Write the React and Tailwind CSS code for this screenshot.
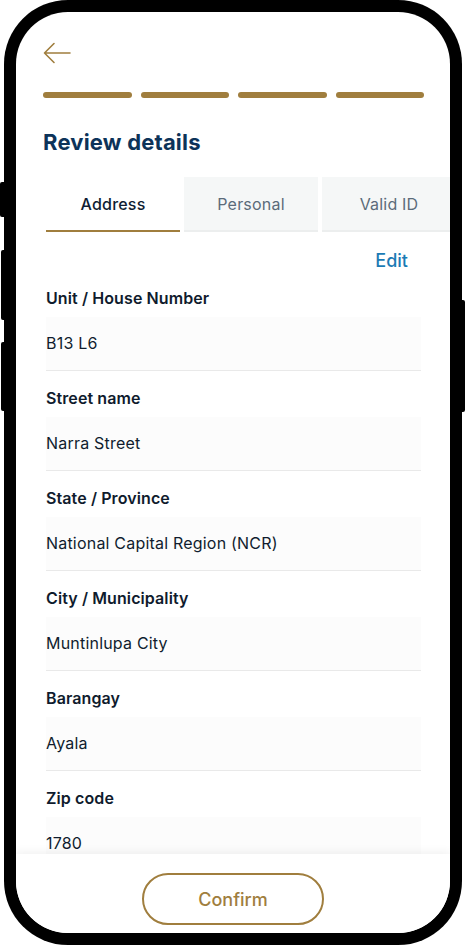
import React from 'react';

const fields = [
  { label: 'Unit / House Number', value: 'B13 L6' },
  { label: 'Street name', value: 'Narra Street' },
  { label: 'State / Province', value: 'National Capital Region (NCR)' },
  { label: 'City / Municipality', value: 'Muntinlupa City' },
  { label: 'Barangay', value: 'Ayala' },
  { label: 'Zip code', value: '1780' },
];

const tabs = ['Address', 'Personal', 'Valid ID'];

const BackArrow = () => (
  <svg width="28" height="22" viewBox="0 0 28 22" fill="none">
    <path d="M11 1.5L1.5 11L11 20.5M1.5 11H27" stroke="#a07e3e" strokeWidth="1.6" strokeLinecap="round" strokeLinejoin="round" />
  </svg>
);

const App = () => {
  return (
    <div className="relative w-[466px] h-[945px] bg-white" style={{ fontFamily: 'Inter, "Noto Sans", sans-serif' }}>
      {/* side buttons */}
      <div className="absolute left-0 top-[182px] w-[8px] h-[35px] rounded-l-[2px] bg-black" />
      <div className="absolute left-[1px] top-[250px] w-[8px] h-[70px] rounded-l-[2px] bg-black" />
      <div className="absolute left-[1px] top-[342px] w-[8px] h-[69px] rounded-l-[2px] bg-black" />
      <div className="absolute left-[458px] top-[300px] w-[7px] h-[112px] rounded-r-[2px] bg-black" />

      {/* phone frame */}
      <div className="relative ml-[4px] w-[458px] h-[945px] rounded-[64px] bg-black p-[12px]">
        <div className="w-full h-full rounded-[52px] bg-white overflow-hidden flex flex-col">
          {/* scrollable content */}
          <div className="flex-1 overflow-hidden pl-[27px]">
            <div className="pt-[30px]">
              <BackArrow />
            </div>

            <div className="mt-[28px] flex gap-[9px] w-[381px]">
              {[0, 1, 2, 3].map((i) => (
                <div key={i} className="flex-1 h-[6px] rounded-full bg-[#a07e3e]" />
              ))}
            </div>

            <h1 className="mt-[29px] h-[30px] leading-[30px] text-[22px] font-bold text-[#0d3359] tracking-[0.2px]">
              Review details
            </h1>

            <div className="mt-[20px] ml-[3px] flex gap-[4px] w-[420px]">
              {tabs.map((t, i) => (
                <div
                  key={t}
                  className={
                    i === 0
                      ? 'shrink-0 w-[134px] h-[55px] flex items-center justify-center bg-white border-b-2 border-[#a07e3e] text-[16px] font-medium text-[#0f1d33] tracking-[0.2px]'
                      : 'shrink-0 w-[134px] h-[55px] flex items-center justify-center bg-[#f5f7f7] border-b-2 border-[#eceeee] text-[16px] text-[#5b6b7a] tracking-[0.2px]'
                  }
                >
                  {t}
                </div>
              ))}
            </div>

            <div className="ml-[3px] w-[375px]">
              <div className="mt-[19px] h-[20px] flex justify-end pr-[13px]">
                <span className="text-[18px] leading-[20px] font-medium text-[#1b7bb5]">Edit</span>
              </div>

              {fields.map((f) => (
                <div key={f.label}>
                  <div className="pt-[17px] pb-[9px] text-[16px] leading-[20px] font-semibold text-[#0f1b2d] tracking-[0.1px]">
                    {f.label}
                  </div>
                  <div className="h-[54px] bg-[#fcfcfc] border-b border-[#e9e9e9] flex items-center pb-[2px] text-[16px] text-[#101c2e] tracking-[0.2px]">
                    {f.value}
                  </div>
                </div>
              ))}
            </div>
          </div>

          {/* footer */}
          <div className="relative shrink-0 h-[79px] bg-white shadow-[0_-3px_8px_rgba(0,0,0,0.05)] flex justify-center pt-[19px]">
            <button className="w-[182px] h-[52px] rounded-full border-2 border-[#a07e3e] text-[18px] font-medium text-[#a07e3e]">
              Confirm
            </button>
          </div>
        </div>
      </div>
    </div>
  );
};

export default App;
